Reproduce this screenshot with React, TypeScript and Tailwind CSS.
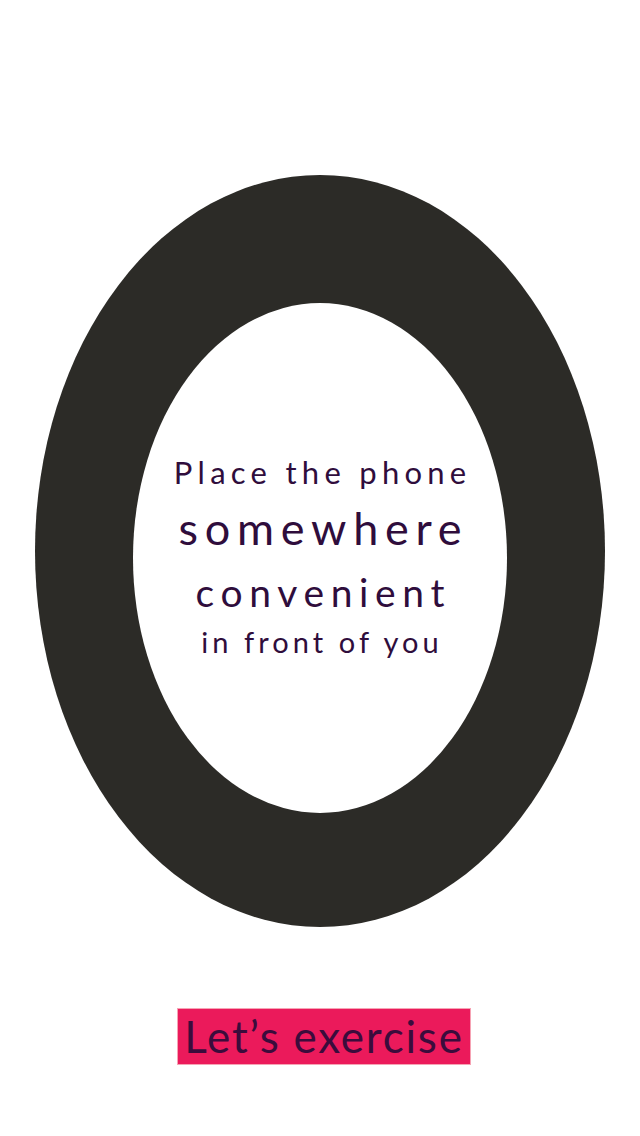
import React from 'react';

const App: React.FC = () => {
  return (
    <div
      className="w-[640px] h-[1136px] bg-white flex flex-col items-center pt-[175px] overflow-hidden"
      style={{ fontFamily: 'Lato, "Open Sans", sans-serif' }}
    >
      {/* Anneau sombre */}
      <div className="w-[570px] h-[752px] rounded-[50%] bg-[#2c2b27] pt-[128px] pl-[98px]">
        <div className="w-[374px] h-[510px] rounded-[50%] bg-white flex flex-col items-center justify-center pb-[4px] text-[#2f0d3c] text-center">
          <div className="text-[31px] leading-none tracking-[0.17em] pl-[0.17em]">Place the phone</div>
          <div className="mt-[18px] text-[45px] leading-none tracking-[0.15em] pl-[0.15em]">somewhere</div>
          <div className="mt-[22px] text-[39px] leading-none tracking-[0.17em] pl-[0.17em]">convenient</div>
          <div className="mt-[15px] text-[29px] leading-none tracking-[0.14em] pl-[0.14em]">in front of you</div>
        </div>
      </div>

      {/* Bouton */}
      <button className="mt-[81px] ml-[8px] w-[294px] h-[57px] bg-[#eb1a5b] border border-[#f6a3b4] text-[#3b0c3c] text-[44px] leading-none tracking-[0.04em] flex items-center justify-center pb-[2px]">
        Let’s exercise
      </button>
    </div>
  );
};

export default App;
